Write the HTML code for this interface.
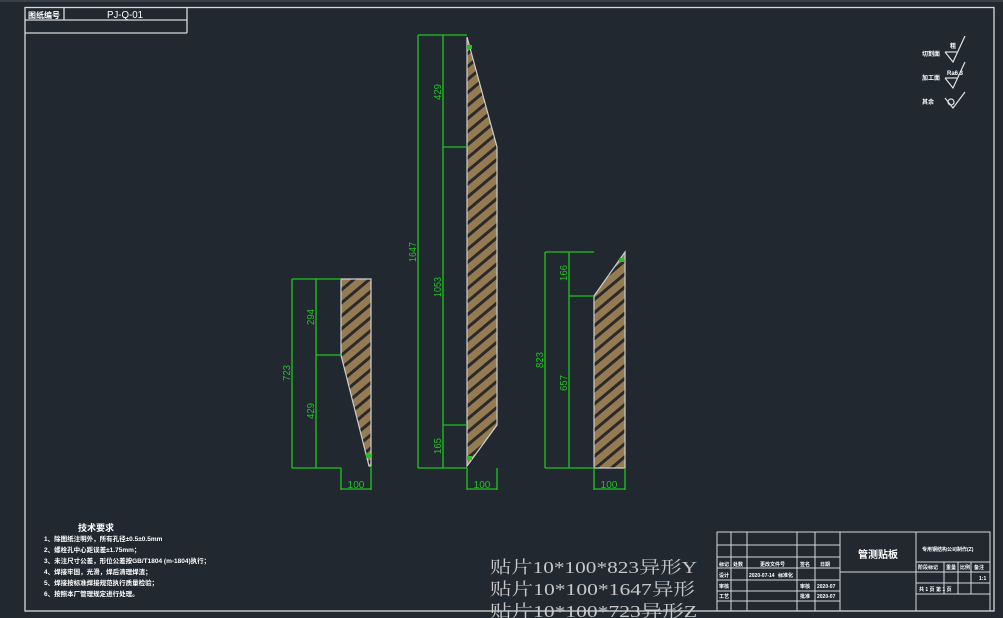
<!DOCTYPE html>
<html><head><meta charset="utf-8"><style>
html,body{margin:0;padding:0;background:#212830;}
svg{display:block}
text{font-family:"Liberation Sans","Noto Sans CJK SC",sans-serif;}
text.serif{font-family:"Liberation Serif","Noto Serif CJK SC",serif;}
</style></head><body>
<svg width="1003" height="618" viewBox="0 0 1003 618" xmlns="http://www.w3.org/2000/svg">
<defs>
<pattern id="h" patternUnits="userSpaceOnUse" width="10" height="10" patternTransform="rotate(-40)">
<rect width="10" height="10" fill="#947b52"/>
<rect y="0" width="10" height="3" fill="#2a2a2a"/>
</pattern>
</defs>
<rect width="1003" height="618" fill="#212830"/>
<rect x="0" y="0" width="1003" height="2" fill="#3a4048"/>
<g stroke="#d8d8d8" stroke-width="1.3" fill="none">
<rect x="25" y="7.5" width="969" height="603.5"/>
<line x1="25" y1="20" x2="187" y2="20"/>
<line x1="25" y1="33" x2="187" y2="33"/>
<line x1="187" y1="7.5" x2="187" y2="33"/>
<line x1="64" y1="7.5" x2="64" y2="20"/>
</g>
<text x="28" y="18" font-size="8" fill="#fff" font-weight="bold">图纸编号</text>
<text x="107" y="18" font-size="10" fill="#fff" textLength="36" lengthAdjust="spacingAndGlyphs">PJ-Q-01</text>

<g stroke="#cfcfcf" stroke-width="1.2">
<polygon points="341,279 371,279 371,466 369,466 341,355" fill="url(#h)"/>
<polygon points="467,37 497,147 497,425 467,466" fill="url(#h)"/>
<polygon points="625,252 625,468 594,468 594,296" fill="url(#h)"/>
</g>

<g stroke="#1ec51e" stroke-width="1.3" fill="none">
<line x1="292" y1="279" x2="292" y2="468"/><line x1="316" y1="279" x2="316" y2="468"/>
<line x1="292" y1="279" x2="341" y2="279"/><line x1="292" y1="468" x2="341" y2="468"/>
<line x1="316" y1="355" x2="341" y2="355"/>
<line x1="341" y1="468" x2="341" y2="490"/><line x1="371" y1="466" x2="371" y2="490"/><line x1="341" y1="489" x2="371" y2="489"/>
<line x1="418" y1="35" x2="418" y2="468"/><line x1="443" y1="35" x2="443" y2="468"/>
<line x1="418" y1="35" x2="467" y2="35"/><line x1="418" y1="468" x2="467" y2="468"/>
<line x1="443" y1="147" x2="467" y2="147"/><line x1="443" y1="425" x2="467" y2="425"/>
<line x1="467" y1="468" x2="467" y2="490"/><line x1="497" y1="468" x2="497" y2="490"/><line x1="467" y1="489" x2="497" y2="489"/>
<line x1="545" y1="252" x2="545" y2="468"/><line x1="569" y1="252" x2="569" y2="468"/>
<line x1="545" y1="252" x2="594" y2="252"/><line x1="545" y1="468" x2="594" y2="468"/>
<line x1="569" y1="296" x2="594" y2="296"/>
<line x1="594" y1="468" x2="594" y2="490"/><line x1="625" y1="468" x2="625" y2="490"/><line x1="594" y1="489" x2="625" y2="489"/>
</g>
<g fill="#1ec51e">
<rect x="366" y="454" width="5" height="4"/><rect x="467" y="45" width="5" height="4"/><rect x="467" y="456" width="5" height="4"/><rect x="619" y="258" width="5" height="4"/>
</g>
<g fill="#1ec51e" font-size="10">
<text transform="translate(290,373) rotate(-90)" text-anchor="middle" textLength="16" lengthAdjust="spacingAndGlyphs">723</text>
<text transform="translate(314,317) rotate(-90)" text-anchor="middle" textLength="16" lengthAdjust="spacingAndGlyphs">294</text>
<text transform="translate(314,411) rotate(-90)" text-anchor="middle" textLength="16" lengthAdjust="spacingAndGlyphs">429</text>
<text x="356" y="488" text-anchor="middle">100</text>
<text transform="translate(416,252) rotate(-90)" text-anchor="middle" textLength="20" lengthAdjust="spacingAndGlyphs">1647</text>
<text transform="translate(441,92) rotate(-90)" text-anchor="middle" textLength="16" lengthAdjust="spacingAndGlyphs">429</text>
<text transform="translate(441,287) rotate(-90)" text-anchor="middle" textLength="20" lengthAdjust="spacingAndGlyphs">1053</text>
<text transform="translate(441,446) rotate(-90)" text-anchor="middle" textLength="16" lengthAdjust="spacingAndGlyphs">165</text>
<text x="482" y="488" text-anchor="middle">100</text>
<text transform="translate(543,360) rotate(-90)" text-anchor="middle" textLength="16" lengthAdjust="spacingAndGlyphs">823</text>
<text transform="translate(567,273) rotate(-90)" text-anchor="middle" textLength="16" lengthAdjust="spacingAndGlyphs">166</text>
<text transform="translate(567,383) rotate(-90)" text-anchor="middle" textLength="16" lengthAdjust="spacingAndGlyphs">657</text>
<text x="609" y="488" text-anchor="middle">100</text>
</g>

<g stroke="#e0e0e0" stroke-width="1.2" fill="none">
<polyline points="945,52 953,62 965,36"/><line x1="945" y1="52" x2="957" y2="52"/>
<polyline points="945,78 953,88 965,62"/><line x1="945" y1="78" x2="957" y2="78"/>
<polyline points="945,98 953,108 965,92"/><circle cx="951" cy="102" r="3"/>
</g>
<g fill="#fff" font-size="6" font-weight="bold">
<text x="922" y="56">切割面</text><text x="950" y="48">粗</text>
<text x="922" y="80">加工面</text><text x="947" y="75" font-size="6">Ra6.3</text>
<text x="922" y="104">其余</text>
</g>

<g fill="#fff" font-size="6.5" font-weight="bold">
<text x="78" y="531" font-size="9">技术要求</text>
<text x="44" y="541">1、除图纸注明外，所有孔径±0.5±0.5mm</text>
<text x="44" y="552">2、螺栓孔中心距误差±1.75mm；</text>
<text x="44" y="563">3、未注尺寸公差，形位公差按GB/T1804 (m-1804)执行；</text>
<text x="44" y="574">4、焊接牢固，光滑，焊后清理焊渣；</text>
<text x="44" y="585">5、焊接按标准焊接规范执行质量检验；</text>
<text x="44" y="596">6、按照本厂管理规定进行处理。</text>
</g>

<g fill="#c8c8c8" font-size="17">
<text class="serif" x="490" y="573" textLength="207" lengthAdjust="spacingAndGlyphs">贴片10*100*823异形Y</text>
<text class="serif" x="490" y="595" textLength="205" lengthAdjust="spacingAndGlyphs">贴片10*100*1647异形</text>
<text class="serif" x="490" y="617" textLength="207" lengthAdjust="spacingAndGlyphs">贴片10*100*723异形Z</text>
</g>

<g stroke="#d8d8d8" stroke-width="1" fill="none">
<rect x="717" y="532" width="273" height="79"/>
<line x1="717" y1="545" x2="840" y2="545"/><line x1="717" y1="557" x2="840" y2="557"/>
<line x1="717" y1="568" x2="840" y2="568"/><line x1="717" y1="580" x2="840" y2="580"/>
<line x1="717" y1="591" x2="840" y2="591"/><line x1="717" y1="601" x2="840" y2="601"/>
<line x1="731" y1="532" x2="731" y2="611"/><line x1="747" y1="532" x2="747" y2="611"/>
<line x1="797" y1="532" x2="797" y2="611"/><line x1="815" y1="532" x2="815" y2="611"/>
<line x1="840" y1="532" x2="840" y2="611"/><line x1="916" y1="532" x2="916" y2="611"/>
<line x1="840" y1="572" x2="916" y2="572"/>
<line x1="916" y1="562" x2="990" y2="562"/><line x1="916" y1="572" x2="990" y2="572"/>
<line x1="916" y1="583" x2="990" y2="583"/><line x1="916" y1="594" x2="990" y2="594"/>
<line x1="944" y1="562" x2="944" y2="594"/><line x1="958" y1="562" x2="958" y2="594"/>
<line x1="971" y1="562" x2="971" y2="594"/>
</g>
<g fill="#fff" font-size="5" font-weight="bold">
<text x="858" y="558" font-size="10">管测贴板</text>
<text x="922" y="551">专用钢结构公司制作(Z)</text>
<text x="918" y="569">阶段标记</text><text x="946" y="569">重量</text><text x="960" y="569">比例</text><text x="974" y="569">备注</text>
<text x="979" y="580">1:1</text>
<text x="919" y="591">共 1 页 第 1 页</text>
<text x="719" y="566">标记</text><text x="733" y="566">处数</text><text x="760" y="566">更改文件号</text><text x="800" y="566">签名</text><text x="820" y="566">日期</text>
<text x="719" y="577">设计</text><text x="749" y="577">2020-07-14</text><text x="778" y="577">标准化</text>
<text x="719" y="588">审核</text><text x="800" y="588">审核</text><text x="817" y="588">2020-07</text>
<text x="719" y="598">工艺</text><text x="800" y="598">批准</text><text x="817" y="598">2020-07</text>
</g>
</svg>
</body></html>
